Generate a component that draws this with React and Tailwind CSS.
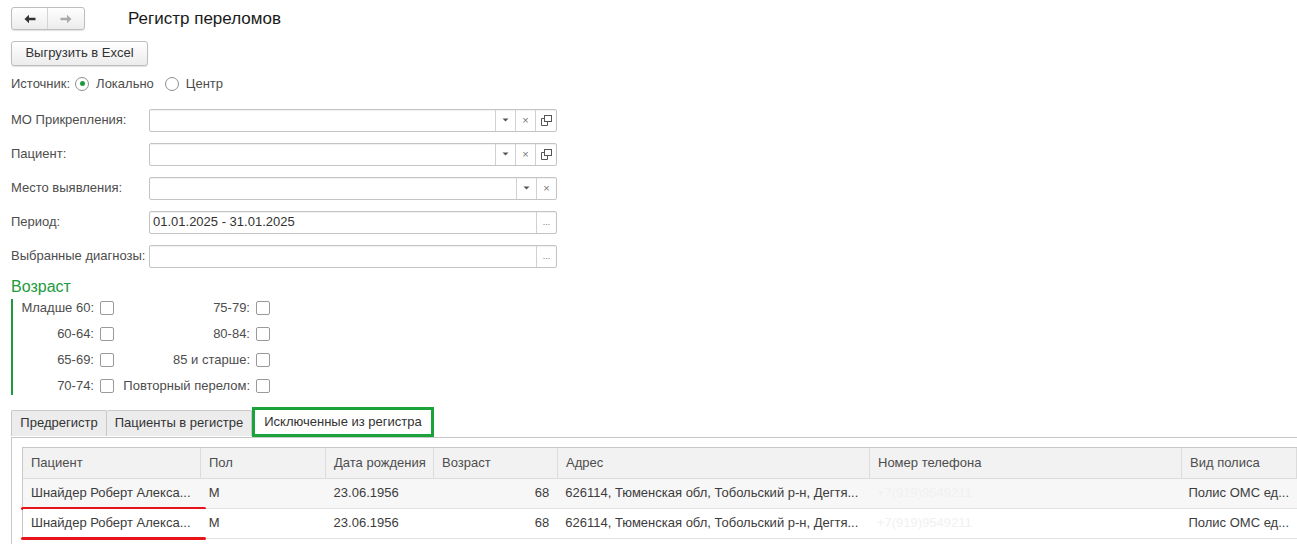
import React from 'react';

const F = { fontFamily: '"Liberation Sans", Arial, sans-serif' };

const BtnDrop = () => (
  <div className="w-5 h-full flex items-center justify-center border-l border-[#d0d0d0]">
    <svg width="7" height="4" viewBox="0 0 7 4"><path d="M0.5 0.5h6L3.5 3.5z" fill="#555" /></svg>
  </div>
);
const BtnClear = () => (
  <div className="w-5 h-full flex items-center justify-center border-l border-[#d0d0d0] text-[#777] text-[11px] leading-none">×</div>
);
const BtnOpen = () => (
  <div className="w-[21px] h-full flex items-center justify-center border-l border-[#d0d0d0]">
    <svg width="11" height="11" viewBox="0 0 11 11" fill="none" stroke="#555" strokeWidth="1">
      <rect x="3.5" y="0.5" width="7" height="6" />
      <path d="M3.5 3.5H0.5v7h6V6.5" />
    </svg>
  </div>
);
const BtnDots = () => (
  <div className="w-5 h-full flex items-end justify-center pb-[6px] border-l border-[#d0d0d0] text-[#777] text-[9px] leading-none">...</div>
);

const Field = ({ label, value, buttons }) => (
  <div className="flex items-center h-[23px]">
    <div className="w-[138px] text-[13px] text-[#4d4d4d]">{label}</div>
    <div className="w-[408px] h-full flex border border-[#c4c4c4] rounded-[2px] bg-white shadow-[inset_0_1px_1px_rgba(0,0,0,0.06)]">
      <div className="flex-1 px-[3px] flex items-center text-[13px] text-[#333]">{value}</div>
      {buttons}
    </div>
  </div>
);

const Check = () => (
  <div className="w-[14px] h-[14px] border border-[#9a9a9a] rounded-[2px] bg-white" />
);

const cols = [
  { t: 'Пациент', w: 'w-[178px]' },
  { t: 'Пол', w: 'w-[125px]' },
  { t: 'Дата рождения', w: 'w-[108px]' },
  { t: 'Возраст', w: 'w-[124px]' },
  { t: 'Адрес', w: 'w-[312px]' },
  { t: 'Номер телефона', w: 'w-[312px]' },
  { t: 'Вид полиса', w: 'flex-1' },
];

const Row = ({ bg }) => (
  <div className={`relative flex h-[30px] border-b border-[#e2e2e2] text-[13px] text-[#3c3c3c] ${bg}`}>
    <div className="w-[178px] px-[8px] flex items-center whitespace-nowrap">Шнайдер Роберт Алекса...</div>
    <div className="w-[125px] px-[8px] flex items-center">М</div>
    <div className="w-[108px] px-[8px] flex items-center">23.06.1956</div>
    <div className="w-[124px] px-[8px] flex items-center justify-end">68</div>
    <div className="w-[312px] px-[8px] flex items-center whitespace-nowrap">626114, Тюменская обл, Тобольский р-н, Дегтя...</div>
    <div className="w-[312px] px-[8px] flex items-center text-[#f1f1f1]">+7(919)9549211</div>
    <div className="flex-1 px-[8px] flex items-center whitespace-nowrap">Полис ОМС ед...</div>
    <div className="absolute left-[-2px] bottom-[-2px] w-[185px] h-[3px] rounded-full bg-[#e8141c]" />
  </div>
);

export default function App() {
  return (
    <div className="w-[1297px] h-[544px] overflow-hidden bg-white text-[#4d4d4d]" style={F}>
      <div className="flex items-center pt-[6px] pl-[11px]">
        <div className="flex h-[23px] border border-[#bdbdbd] rounded-[3px] bg-gradient-to-b from-white to-[#ececec] shadow-[0_1px_1px_rgba(0,0,0,0.12)]">
          <div className="w-[36px] flex items-center justify-center border-r border-[#d4d4d4]">
            <svg width="12" height="10" viewBox="0 0 12 10"><path d="M0.5 5L5 0.8V3.8H11.5V6.2H5V9.2z" fill="#333" /></svg>
          </div>
          <div className="w-[36px] flex items-center justify-center">
            <svg width="12" height="10" viewBox="0 0 12 10"><path d="M11.5 5L7 0.8V3.8H0.5V6.2H7V9.2z" fill="#aaa" /></svg>
          </div>
        </div>
        <div className="ml-[43px] text-[17px] text-[#1a1a1a]">Регистр переломов</div>
      </div>

      <div className="pl-[11px] pt-[9px]">
        <div className="w-[137px] h-[25px] flex items-center justify-center border border-[#bdbdbd] rounded-[3px] bg-gradient-to-b from-white to-[#ececec] shadow-[0_1px_1px_rgba(0,0,0,0.12)] text-[13px] text-[#333]">
          Выгрузить в Excel
        </div>
      </div>

      <div className="flex items-center pl-[11px] mt-[8px] h-[20px] text-[13px]">
        <span>Источник:</span>
        <div className="ml-[5px] w-[14px] h-[14px] rounded-full border border-[#8f8f8f] flex items-center justify-center">
          <div className="w-[5px] h-[5px] rounded-full bg-[#1d9a3c]" />
        </div>
        <span className="ml-[7px]">Локально</span>
        <div className="ml-[11px] w-[14px] h-[14px] rounded-full border border-[#8f8f8f]" />
        <span className="ml-[7px]">Центр</span>
      </div>

      <div className="pl-[11px] mt-[15px] flex flex-col gap-[11px]">
        <Field label="МО Прикрепления:" buttons={<><BtnDrop /><BtnClear /><BtnOpen /></>} />
        <Field label="Пациент:" buttons={<><BtnDrop /><BtnClear /><BtnOpen /></>} />
        <Field label="Место выявления:" buttons={<><BtnDrop /><BtnClear /></>} />
        <Field label="Период:" value="01.01.2025 - 31.01.2025" buttons={<BtnDots />} />
        <Field label="Выбранные диагнозы:" buttons={<BtnDots />} />
      </div>

      <div className="pl-[11px] mt-[9px]">
        <div className="text-[16px] leading-[20px] text-[#1d9a3c]">Возраст</div>
        <div className="border-l-2 border-[#1d9a3c] h-[96px] mt-[2px] flex flex-col justify-between text-[13px]">
          {[
            ['Младше 60:', '75-79:'],
            ['60-64:', '80-84:'],
            ['65-69:', '85 и старше:'],
            ['70-74:', 'Повторный перелом:'],
          ].map(([a, b]) => (
            <div key={a} className="flex items-center h-[18px]">
              <div className="w-[81px] text-right">{a}</div>
              <div className="ml-[6px]"><Check /></div>
              <div className="w-[136px] text-right">{b}</div>
              <div className="ml-[6px]"><Check /></div>
            </div>
          ))}
        </div>
      </div>

      <div className="pl-[11px] mt-[12px]">
        <div className="flex items-end h-[30px] text-[13px] text-[#333]">
          <div className="w-[96px] h-[26px] mb-[1px] flex items-center justify-center bg-[#ececec] border border-[#c8c8c8] border-b-0 rounded-t-[2px]">Предрегистр</div>
          <div className="w-[145px] h-[26px] mb-[1px] flex items-center justify-center bg-[#ececec] border border-[#c8c8c8] border-b-0 border-l-0 rounded-t-[2px]">Пациенты в регистре</div>
          <div className="w-[182px] h-[30px] flex items-center justify-center bg-white border-[3px] border-[#1aa33a]">Исключенные из регистра</div>
        </div>
        <div className="border-t border-l border-[#c8c8c8] h-[110px] pl-[10px] pt-[9px]">
          <div className="border-t border-l border-[#c8c8c8]">
            <div className="flex h-[31px] bg-[#f2f2f2] border-b border-[#dcdcdc] text-[13px] text-[#4d4d4d]">
              {cols.map(c => (
                <div key={c.t} className={`${c.w} px-[8px] flex items-center border-r border-[#dcdcdc] whitespace-nowrap`}>{c.t}</div>
              ))}
            </div>
            <Row bg="bg-[#f7f7f7]" />
            <Row bg="bg-white" />
          </div>
        </div>
      </div>
    </div>
  );
}
